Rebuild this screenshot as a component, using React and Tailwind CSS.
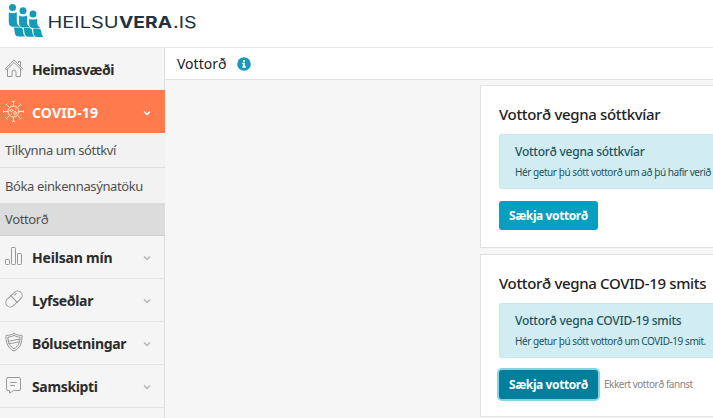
import clsx from 'clsx';

function Logo() {
  return (
    <svg width="200" height="46" viewBox="0 0 200 46" role="img" aria-label="Heilsuvera.is">
      <g fill="#1799b8">
        <circle cx="12.500" cy="7.500" r="3.500" />
        <circle cx="23" cy="10.700" r="3.500" />
        <circle cx="33" cy="14" r="3.500" />
        <path d="M8.800 12.300c2 1.200 5.500 1.200 8 0v8.700c0 3 1.200 4.400 3.600 5.700H13c-2.800 0-4.200-1.600-4.200-4.200z" />
        <path d="M19.100 15.500c2 1.200 5.500 1.200 8 0V22c0 3 1 4.200 3.200 5.400h-7c-2.800 0-4.200-1.600-4.200-4.200z" />
        <path d="M29.200 18.700c2 1.200 5.500 1.200 8 0v4.100c0 2.600 1 3.800 3.200 5.100h-7c-2.800 0-4.200-1.400-4.200-4z" />
        <path d="M14 27.400h5.800c2.200 0 3 1 3.200 3 .2 2.500.5 4.500 2.200 6.100h-6.700c-2.200 0-3.400-1.200-3.600-3.200z" />
        <path d="M23.800 28.100h5.200c2 0 3 1 3.200 3 .2 2.200.5 4 2 5.600h-6c-2.200 0-3.400-1.200-3.600-3.200z" />
        <path d="M33 28.500h5c2.200 0 3 1 3.300 3 .2 2.200.6 4 2.200 5.500h-6.400c-2.200 0-3.200-1.200-3.400-3.200z" />
      </g>
      <g className="font-['Inter',sans-serif]" fill="#22333f" fontSize="16.500">
        <text x="47.500" y="28" textLength="71" lengthAdjust="spacingAndGlyphs">HEILSU</text>
        <text x="119" y="28" textLength="53" lengthAdjust="spacingAndGlyphs" fontWeight="700">VERA</text>
        <text x="173" y="28" textLength="23.500" lengthAdjust="spacingAndGlyphs">.IS</text>
      </g>
    </svg>
  );
}

function Icon({ children, className }) {
  return (
    <svg
      width="24"
      height="24"
      viewBox="0 0 24 24"
      fill="none"
      stroke="currentColor"
      strokeLinecap="round"
      strokeLinejoin="round"
      className={clsx('shrink-0', className)}
    >
      {children}
    </svg>
  );
}

const icons = {
  home: <path d="M5.500 11v7.500H10v-4.500a2 2 0 0 1 4 0v4.500h4.500V11M3.500 10.500 12 2l8.500 8.500-1.200 1.200L12 4.500l-7.300 7.200zM16.500 4.500v-1h2V8" />,
  virus: (
    <>
      <circle cx="11.500" cy="10.500" r="5.500" />
      <path d="M11.500 5V.500M11.500 16v4.500M6 10.500H1.500M17 10.500h4.500M7.500 6.500l-3-3M15.500 6.500l3-3M7.500 14.500l-3 3M15.500 14.500l3 3M10.500.500h2M10.500 20.500h2M1.500 9.500v2M21.500 9.500v2M3.800 4.200l1.400-1.400M17.800 2.800l1.400 1.400M3.800 16.800l1.400 1.400M17.800 18.200l1.400-1.400" />
      <circle cx="9.500" cy="9.500" r="1.200" />
      <circle cx="13" cy="12" r="1.400" />
      <path d="M9.500 13h.2M13.500 8h.2" />
    </>
  ),
  chart: (
    <>
      <rect x="3.500" y="13.500" width="4" height="5" rx=".8" />
      <rect x="9.500" y="1.500" width="4" height="17" rx=".8" />
      <rect x="15.500" y="7.500" width="4" height="11" rx=".8" />
    </>
  ),
  pill: (
    <g transform="rotate(-43 12 10)">
      <rect x="2.500" y="5.500" width="19" height="9" rx="4.500" />
      <path d="M12 5.500v9M15 7.500h2.500" />
    </g>
  ),
  shield: (
    <>
      <path d="M12 1.500c-2.500 1.500-5 2-8 1.800C3.700 11 6 16.500 12 19c6-2.500 8.300-8 8-15.700-3 .2-5.500-.3-8-1.800z" />
      <path d="M12 3.500c-2 1.100-3.800 1.500-6 1.500 0 5.500 1.600 9.500 6 11.800 4.400-2.300 6-6.300 6-11.800-2.200 0-4-.4-6-1.500zM6 9c4 1 7-2.500 12-1.500M6.700 11.500c4 .8 7-2 11-1.500" />
    </>
  ),
  chat: (
    <>
      <path d="M6 2.500h11a1.500 1.500 0 0 1 1.500 1.500v10a1.500 1.500 0 0 1-1.500 1.500h-5.500l-4 2.700v-2.700H6A1.500 1.500 0 0 1 4.500 14V4A1.500 1.500 0 0 1 6 2.500z" />
      <path d="M8.500 7.500h6M8.500 10.500h4" />
    </>
  ),
};

function MenuItem({ icon, label, labelClass = 'tracking-[-0.35px]', active, arrow = true }) {
  return (
    <div
      className={clsx(
        'flex h-[43px] items-center pt-[2px] pr-[13px] pl-[2px]',
        active ? 'bg-[#ff7b4d] text-white' : 'border-b border-[#e4e4e4] text-[#2b2b2b]'
      )}
    >
      <Icon className={active ? 'text-[#ffe5cf]' : 'text-[#999]'}>{icons[icon]}</Icon>
      <span className={clsx('ml-[6px] flex-1 text-[14px] leading-5 font-bold whitespace-nowrap', labelClass)}>{label}</span>
      {arrow && (
        <svg
          width="10"
          height="8"
          viewBox="0 0 10 8"
          fill="none"
          stroke="currentColor"
          strokeWidth="1.500"
          className={active ? 'text-white' : 'text-[#b5b5b5]'}
        >
          <path d="M2 2.500 5 5.500 8 2.500" />
        </svg>
      )}
    </div>
  );
}

function Sidebar() {
  return (
    <nav className="w-[165px] shrink-0 border-r border-[#dedede] bg-[#f5f5f5]">
      <div className="-mr-px">
        <div className="h-[42px] overflow-hidden">
          <MenuItem icon="home" label="Heimasvæði" labelClass="tracking-[-0.4px]" arrow={false} />
        </div>
        <MenuItem icon="virus" label="COVID-19" labelClass="tracking-[0.15px]" active />
        <div className="bg-[#f2f2f2] text-[13px] tracking-[-0.38px] whitespace-nowrap text-[#505050]">
          <div className="flex h-[35px] items-center border-b border-[#dedede] pt-px pl-[5px]">Tilkynna um sóttkví</div>
          <div className="flex h-[35px] items-center pt-[2px] pl-[5px]">Bóka einkennasýnatöku</div>
          <div className="flex h-[33px] items-center border-b border-[#d2d2d2] bg-[#dcdcdc] pt-px pl-[5px]">Vottorð</div>
        </div>
        <MenuItem icon="chart" label="Heilsan mín" labelClass="tracking-[-0.2px]" />
        <MenuItem icon="pill" label="Lyfseðlar" />
        <MenuItem icon="shield" label="Bólusetningar" />
        <MenuItem icon="chat" label="Samskipti" />
      </div>
    </nav>
  );
}

function CertificateCard({ title, text, focused, message }) {
  return (
    <section className="h-[163px] border border-r-0 border-[#e2e2e2] bg-white pt-[17px] pl-[18px] whitespace-nowrap">
      <h2 className="text-[15px] leading-[22px] font-medium tracking-[-0.34px] text-[#222]">{title}</h2>
      <div className="mt-[9px] h-[55px] rounded-l-[3px] border border-r-0 border-[#c3e7ec] bg-[#d1edf1] pt-[8px] pl-[15px] text-[#1c5360]">
        <h3 className="text-[12px] leading-[18px] font-medium tracking-[-0.25px]">{title}</h3>
        <p className="mt-[3px] text-[10px] leading-4 tracking-[-0.44px]">{text}</p>
      </div>
      <div className="mt-3 flex items-center">
        <button
          className={clsx(
            'h-[29px] w-[99px] rounded-[3px] text-[12px] font-bold tracking-[-0.4px] text-white',
            focused ? 'bg-[#027f9d] ring-2 ring-[#87d3e3]' : 'bg-[#069ec1]'
          )}
        >
          Sækja vottorð
        </button>
        {message && <span className="ml-[6px] text-[10px] tracking-[-0.5px] text-[#868686]">{message}</span>}
      </div>
    </section>
  );
}

export default function App() {
  return (
    <div className="flex h-[418px] w-[713px] flex-col overflow-hidden bg-white font-['Noto_Sans',sans-serif]">
      <header className="h-12 shrink-0 border-b border-[#e3e3e3]">
        <Logo />
      </header>
      <div className="flex min-h-0 flex-1">
        <Sidebar />
        <main className="min-w-0 flex-1 bg-[#f6f6f6]">
          <div className="flex h-[32px] items-center gap-[11px] border-b border-[#e2e2e2] bg-white pl-[12px]">
            <h1 className="text-[14px] text-[#222]">Vottorð</h1>
            <svg width="14" height="14" viewBox="0 0 14 14">
              <circle cx="7" cy="7" r="6.800" fill="#1799b8" />
              <path d="M6 3h2v1.800H6zM5.300 5.800H8v3.500h.8v1.400H5.300V9.300H6V7.200h-.7z" fill="#fff" />
            </svg>
          </div>
          <div className="mt-[5px] ml-[315px] flex flex-col gap-[6px]">
            <CertificateCard title="Vottorð vegna sóttkvíar" text="Hér getur þú sótt vottorð um að þú hafir verið" />
            <CertificateCard
              title="Vottorð vegna COVID-19 smits"
              text="Hér getur þú sótt vottorð um COVID-19 smit."
              message="Ekkert vottorð fannst"
              focused
            />
          </div>
        </main>
      </div>
    </div>
  );
}
